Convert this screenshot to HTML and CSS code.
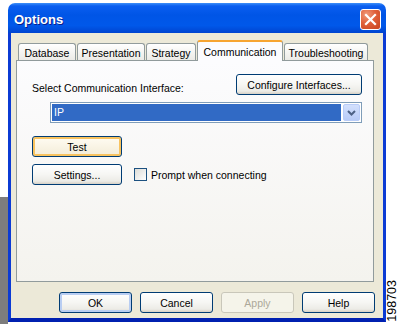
FILE: index.html
```html
<!DOCTYPE html>
<html lang="en">

<head>
    <meta charset="UTF-8">
    <meta name="viewport" content="width=device-width, initial-scale=1.0">
    <title>Options</title>
    <link rel="stylesheet" href="styles.css">
</head>

<body>
    <div class="screen">
        <div class="edge-left"></div>

        <div class="window">
            <div class="titlebar">
                <span class="title">Options</span>
                <button class="close" aria-label="Close">
                    <svg width="13" height="13" viewBox="0 0 13 13">
                        <path d="M2 2 L11 11 M11 2 L2 11" stroke="#fff" stroke-width="2.2" stroke-linecap="square" fill="none" />
                    </svg>
                </button>
            </div>

            <div class="dialog">
                <div class="tabs">
                    <div class="tab tab-database">Database</div>
                    <div class="tab tab-presentation">Presentation</div>
                    <div class="tab tab-strategy">Strategy</div>
                    <div class="tab tab-communication active">Communication</div>
                    <div class="tab tab-troubleshooting">Troubleshooting</div>
                </div>

                <div class="panel">
                    <div class="panel-header">
                        <span class="field-label">Select Communication Interface:</span>
                        <button class="btn btn-configure">Configure Interfaces...</button>
                    </div>

                    <div class="combo">
                        <span class="combo-value">IP</span>
                        <span class="combo-arrow">
                            <svg width="9" height="6" viewBox="0 0 9 6">
                                <path d="M1 1 L4.5 4.5 L8 1" stroke="#4D6185" stroke-width="2" fill="none" />
                            </svg>
                        </span>
                    </div>

                    <button class="btn btn-wide btn-hover btn-test">Test</button>

                    <div class="settings-row">
                        <button class="btn btn-wide">Settings...</button>
                        <span class="checkbox"></span>
                        <span class="check-label">Prompt when connecting</span>
                    </div>
                </div>

                <div class="actions">
                    <button class="btn btn-action btn-default">OK</button>
                    <button class="btn btn-action">Cancel</button>
                    <button class="btn btn-action" disabled>Apply</button>
                    <button class="btn btn-action">Help</button>
                </div>
            </div>
        </div>

        <div class="edge-right">
            <span class="figure-id">198703</span>
        </div>
    </div>
</body>

</html>
```

FILE: styles.css
```css
* {
    box-sizing: border-box;
}

body {
    margin: 0;
    background-color: #fff;
    font-family: "Liberation Sans", Arial, sans-serif;
    font-size: 10.5px;
    color: #000;
}

.screen {
    display: flex;
    width: 399px;
    height: 324px;
    overflow: hidden;
}

.edge-left {
    flex: none;
    width: 8px;
    background: linear-gradient(#fff 0, #fff 197px, #7d7d7d 197px);
}

.window {
    flex: none;
    display: flex;
    flex-direction: column;
    width: 378px;
    height: 319px;
    margin-top: 3px;
}

.titlebar {
    flex: none;
    display: flex;
    justify-content: space-between;
    align-items: flex-start;
    height: 30px;
    padding: 0 5px 0 6px;
    border-radius: 7px 7px 0 0;
    background: linear-gradient(#3d8ff8 0, #0a5ef0 3px, #0055e6 40%, #0058ea 75%, #0044d0 100%);
}

.title {
    margin-top: 4px;
    line-height: 26px;
    font-size: 13px;
    font-weight: bold;
    color: #fff;
    text-shadow: 1px 1px #0a1e8c;
}

.close {
    display: flex;
    align-items: center;
    justify-content: center;
    width: 21px;
    height: 21px;
    margin-top: 6px;
    padding: 0;
    border: 1px solid #fff;
    border-radius: 3px;
    background: radial-gradient(circle at 30% 25%, #f09a7c 0, #e0603a 45%, #c8431d 100%);
}

.dialog {
    flex: 1;
    display: flex;
    flex-direction: column;
    padding: 7px 0 5px;
    background-color: #ece9d8;
    border: 3px solid #0b3bd4;
    border-top: none;
    border-bottom: 4px solid #0020b0;
}

.tabs {
    display: flex;
    align-items: flex-end;
    gap: 1px;
    height: 20px;
    padding-left: 7px;
}

.tab {
    display: flex;
    align-items: center;
    justify-content: center;
    height: 17px;
    padding-top: 1px;
    border: 1px solid #919b9c;
    border-bottom: none;
    border-radius: 3px 3px 0 0;
    background: linear-gradient(#fff, #ecebe6);
}

.tab.active {
    position: relative;
    z-index: 1;
    height: 21px;
    margin-bottom: -1px;
    padding-top: 0;
    border-top: 2px solid #f7a531;
    background: #fcfcfe;
}

.tab-database {
    width: 58px;
}

.tab-presentation {
    width: 68px;
}

.tab-strategy {
    width: 50px;
}

.tab-communication {
    width: 86px;
}

.tab-troubleshooting {
    width: 84px;
}

.panel {
    display: flex;
    flex-direction: column;
    align-items: flex-start;
    height: 222px;
    margin: 0 9px 0 5px;
    padding: 13px 11px 0 15px;
    border: 1px solid #919b9c;
    background: linear-gradient(#fcfcfe, #f4f3ee);
}

.panel-header {
    display: flex;
    justify-content: space-between;
    align-items: flex-end;
    width: 100%;
}

.field-label {
    line-height: 13px;
}

.btn {
    height: 21px;
    padding: 0;
    border: 1px solid #003c74;
    border-radius: 3px;
    background: linear-gradient(#fff 0, #f6f6f3 50%, #ecebe6 85%, #d6d0c5 100%);
    font-family: inherit;
    font-size: 10.5px;
    color: #000;
}

.btn-configure {
    width: 126px;
}

.btn-wide {
    width: 90px;
}

.btn-hover {
    box-shadow: inset 0 0 0 2px #f8c360;
    background: linear-gradient(#fffcf3, #f3ecd7);
}

.btn-default {
    box-shadow: inset 0 0 0 2px #b8cdf2;
}

.btn:disabled {
    border-color: #c9c7ba;
    background: #f5f4ea;
    color: #aca899;
}

.combo {
    display: flex;
    width: 312px;
    height: 21px;
    margin: 7px 0 0 18px;
    padding: 1px;
    border: 1px solid #7f9db9;
    background-color: #fff;
}

.combo-value {
    flex: 1;
    margin-right: 2px;
    padding-left: 2px;
    line-height: 17px;
    background-color: #316ac5;
    color: #fff;
}

.combo-arrow {
    display: flex;
    align-items: center;
    justify-content: center;
    width: 17px;
    border: 1px solid #b9ccf8;
    border-radius: 2px;
    background: linear-gradient(#d3e0fd, #b8cbf7);
}

.btn-test {
    margin-top: 13px;
}

.settings-row {
    display: flex;
    align-items: center;
    margin-top: 7px;
}

.checkbox {
    width: 13px;
    height: 13px;
    margin-left: 12px;
    border: 1px solid #1c5180;
    background: linear-gradient(135deg, #dcdcd7, #fff);
}

.check-label {
    margin-left: 4px;
}

.actions {
    display: flex;
    justify-content: flex-end;
    gap: 8px;
    margin-top: 10px;
    padding-right: 8px;
}

.btn-action {
    width: 73px;
}

.edge-right {
    flex: 1;
    display: flex;
    align-items: flex-end;
    justify-content: center;
}

.figure-id {
    margin-bottom: 2px;
    writing-mode: vertical-rl;
    transform: rotate(180deg);
    font-size: 12.5px;
    line-height: 13px;
}
```
